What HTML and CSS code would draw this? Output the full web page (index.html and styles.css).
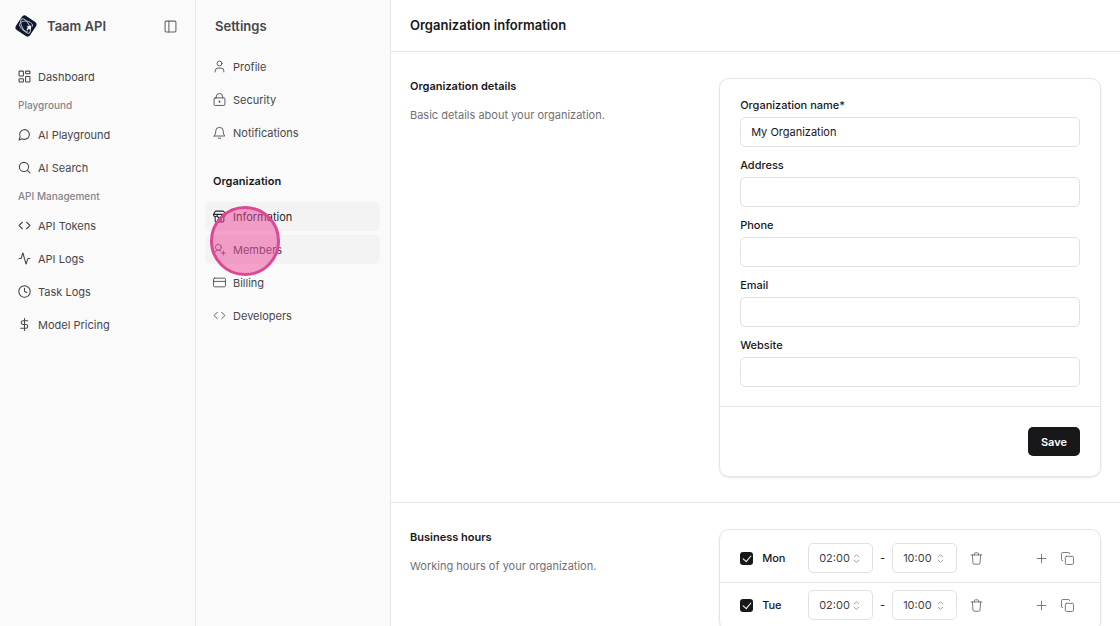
FILE: index.html
```html
<!DOCTYPE html>
<html lang="en">
<head>
<meta charset="utf-8">
<meta name="viewport" content="width=device-width, initial-scale=1">
<title>Organization information</title>
<link rel="stylesheet" href="styles.css">
</head>
<body>
<svg class="sprite" aria-hidden="true">
  <symbol id="i-panel" viewBox="0 0 24 24"><rect x="2" y="2" width="20" height="20" rx="2"/><path d="M9 2v20"/></symbol>
  <symbol id="i-dashboard" viewBox="0 0 24 24"><rect x="2" y="2" width="8" height="9" rx="1"/><rect x="14" y="2" width="8" height="5" rx="1"/><rect x="14" y="12" width="8" height="10" rx="1"/><rect x="2" y="16" width="8" height="6" rx="1"/></symbol>
  <symbol id="i-chat" viewBox="0 0 24 24"><path d="M7.9 20A9 9 0 1 0 4 16.1L2 22Z"/></symbol>
  <symbol id="i-search" viewBox="0 0 24 24"><circle cx="11" cy="11" r="8.500"/><path d="m22 22-4.800-4.800"/></symbol>
  <symbol id="i-code" viewBox="0 0 24 24"><path d="m16 18 6-6-6-6M8 6l-6 6 6 6"/></symbol>
  <symbol id="i-activity" viewBox="0 0 24 24"><path d="M22 12h-2.5a2 2 0 0 0-1.9 1.5l-2.4 8.3a.25.25 0 0 1-.5 0L9.2 2.2a.25.25 0 0 0-.5 0l-2.3 8.3A2 2 0 0 1 4.500 12H2"/></symbol>
  <symbol id="i-clock" viewBox="0 0 24 24"><circle cx="12" cy="12" r="10.500"/><path d="M12 6v6l4 2"/></symbol>
  <symbol id="i-dollar" viewBox="0 0 24 24"><path d="M12 1v22M18 5H9.500a3.500 3.500 0 0 0 0 7h5a3.500 3.500 0 0 1 0 7H5"/></symbol>
  <symbol id="i-user" viewBox="0 0 24 24"><circle cx="12" cy="6.500" r="4.500"/><path d="M4 22v-2a5 5 0 0 1 5-5h6a5 5 0 0 1 5 5v2"/></symbol>
  <symbol id="i-lock" viewBox="0 0 24 24"><rect x="2" y="9" width="20" height="14" rx="2"/><path d="M6 9V7a6 6 0 0 1 12 0v2"/><path d="M12 15.500v1" stroke-width="3"/></symbol>
  <symbol id="i-bell" viewBox="0 0 24 24"><path d="M2 18.500h20c-2-2-3-4-3-9a7 7 0 0 0-14 0c0 5-1 7-3 9ZM10 22.500h4"/></symbol>
  <symbol id="i-store" viewBox="0 0 24 24"><path d="M6 2h12a3 3 0 0 1 2.500 1.500L23 8v1a3 3 0 0 1-3 3 4 4 0 0 1-4-2 4 4 0 0 1-8 0 4 4 0 0 1-4 2 3 3 0 0 1-3-3V8l2.500-4.500A3 3 0 0 1 6 2ZM1 8h22M4 12v8a2 2 0 0 0 2 2h12a2 2 0 0 0 2-2v-8M9 22v-4a2 2 0 0 1 2-2h2a2 2 0 0 1 2 2v4"/></symbol>
  <symbol id="i-user-plus" viewBox="0 0 24 24"><circle cx="10" cy="8" r="5.500"/><path d="M2 21c0-4 3-7.500 8-7.500 2 0 3 .4 4 1M19 15v7M15.500 18.500h7"/></symbol>
  <symbol id="i-card" viewBox="0 0 24 24"><rect x="1" y="4" width="22" height="16" rx="2"/><path d="M1 10h22"/></symbol>
  <symbol id="i-trash" viewBox="0 0 24 24"><path d="M2 5.500h20M4.500 5.500l1 15a2 2 0 0 0 2 2h9a2 2 0 0 0 2-2l1-15M8 5.500v-2a2 2 0 0 1 2-2h4a2 2 0 0 1 2 2v2"/></symbol>
  <symbol id="i-plus" viewBox="0 0 24 24"><path d="M4 12h16M12 4v16"/></symbol>
  <symbol id="i-copy" viewBox="0 0 24 24"><rect x="8" y="8" width="15" height="15" rx="2"/><path d="M3 16a2 2 0 0 1-2-2V3a2 2 0 0 1 2-2h11a2 2 0 0 1 2 2"/></symbol>
  <symbol id="i-updown" viewBox="0 0 24 24"><path d="m5 8 7-6 7 6M5 16l7 6 7-6"/></symbol>
</svg>
<div class="app">
  <aside class="sidebar">
    <div class="brand">
      <svg class="logo" viewBox="0 0 24 24" aria-hidden="true"><rect class="logo-shape" x="3.500" y="3.500" width="17" height="17" rx="3.500" transform="rotate(34 12 12)"/><g class="logo-lines"><ellipse cx="11.500" cy="12" rx="8" ry="3.600" transform="rotate(62 11.500 12)"/><path d="M5.500 12c-1-4 5-6 9-4.500 3 1 4.500 3 4 5M6 12c1 4 5 6 8 5"/></g><path class="logo-mark" d="m12.500 12.500 5-1-1 4.500-1.500-1.300-1.500 1.500-1-1 1.500-1.500Z"/></svg>
      <span class="brand-name">Taam API</span>
      <button class="icon-button" type="button" aria-label="Toggle sidebar"><svg class="icon"><use href="#i-panel"/></svg></button>
    </div>
    <nav class="nav" aria-label="Main">
      <a class="nav-item" href="#"><svg class="icon"><use href="#i-dashboard"/></svg>Dashboard</a>
      <h2 class="nav-group">Playground</h2>
      <a class="nav-item" href="#"><svg class="icon"><use href="#i-chat"/></svg>AI Playground</a>
      <a class="nav-item" href="#"><svg class="icon"><use href="#i-search"/></svg>AI Search</a>
      <h2 class="nav-group">API Management</h2>
      <a class="nav-item" href="#"><svg class="icon"><use href="#i-code"/></svg>API Tokens</a>
      <a class="nav-item" href="#"><svg class="icon"><use href="#i-activity"/></svg>API Logs</a>
      <a class="nav-item" href="#"><svg class="icon"><use href="#i-clock"/></svg>Task Logs</a>
      <a class="nav-item" href="#"><svg class="icon"><use href="#i-dollar"/></svg>Model Pricing</a>
    </nav>
  </aside>
  <aside class="settings">
    <h2 class="settings-title">Settings</h2>
    <nav class="settings-nav" aria-label="Settings">
      <a class="settings-item" href="#"><svg class="icon thin"><use href="#i-user"/></svg>Profile</a>
      <a class="settings-item" href="#"><svg class="icon thin"><use href="#i-lock"/></svg>Security</a>
      <a class="settings-item" href="#"><svg class="icon thin"><use href="#i-bell"/></svg>Notifications</a>
      <h3 class="settings-group">Organization</h3>
      <a class="settings-item current" href="#" aria-current="page"><svg class="icon"><use href="#i-store"/></svg>Information</a>
      <a class="settings-item hovered" href="#"><svg class="icon thin"><use href="#i-user-plus"/></svg>Members</a>
      <a class="settings-item" href="#"><svg class="icon thin"><use href="#i-card"/></svg>Billing</a>
      <a class="settings-item" href="#"><svg class="icon thin"><use href="#i-code"/></svg>Developers</a>
    </nav>
    <span class="click-marker" aria-hidden="true"></span>
  </aside>
  <main class="main">
    <header class="page-header"><h1 class="page-title">Organization information</h1></header>
    <section class="section">
      <div class="intro">
        <h2 class="section-title">Organization details</h2>
        <p class="section-text">Basic details about your organization.</p>
      </div>
      <form class="panel">
        <div class="fields">
          <div class="field"><label for="name">Organization name*</label><input class="text-input" id="name" type="text" value="My Organization"></div>
          <div class="field"><label for="address">Address</label><input class="text-input" id="address" type="text"></div>
          <div class="field"><label for="phone">Phone</label><input class="text-input" id="phone" type="tel"></div>
          <div class="field"><label for="email">Email</label><input class="text-input" id="email" type="email"></div>
          <div class="field"><label for="website">Website</label><input class="text-input" id="website" type="url"></div>
        </div>
        <div class="panel-footer"><button class="save" type="submit">Save</button></div>
      </form>
    </section>
    <section class="section">
      <div class="intro">
        <h2 class="section-title">Business hours</h2>
        <p class="section-text">Working hours of your organization.</p>
      </div>
      <div class="panel hours">
        <div class="day">
          <label class="day-name"><input class="check" type="checkbox" checked>Mon</label>
          <span class="time"><select aria-label="Monday opens"><option>02:00</option></select><svg class="updown"><use href="#i-updown"/></svg></span>
          <span class="dash">-</span>
          <span class="time"><select aria-label="Monday closes"><option>10:00</option></select><svg class="updown"><use href="#i-updown"/></svg></span>
          <button class="icon-button remove" type="button" aria-label="Remove"><svg class="icon thin"><use href="#i-trash"/></svg></button>
          <span class="day-actions">
            <button class="icon-button" type="button" aria-label="Add"><svg class="icon thin"><use href="#i-plus"/></svg></button>
            <button class="icon-button" type="button" aria-label="Copy"><svg class="icon thin"><use href="#i-copy"/></svg></button>
          </span>
        </div>
        <div class="day">
          <label class="day-name"><input class="check" type="checkbox" checked>Tue</label>
          <span class="time"><select aria-label="Tuesday opens"><option>02:00</option></select><svg class="updown"><use href="#i-updown"/></svg></span>
          <span class="dash">-</span>
          <span class="time"><select aria-label="Tuesday closes"><option>10:00</option></select><svg class="updown"><use href="#i-updown"/></svg></span>
          <button class="icon-button remove" type="button" aria-label="Remove"><svg class="icon thin"><use href="#i-trash"/></svg></button>
          <span class="day-actions">
            <button class="icon-button" type="button" aria-label="Add"><svg class="icon thin"><use href="#i-plus"/></svg></button>
            <button class="icon-button" type="button" aria-label="Copy"><svg class="icon thin"><use href="#i-copy"/></svg></button>
          </span>
        </div>
      </div>
    </section>
  </main>
</div>
</body>
</html>
```
FILE: styles.css
```css
* { box-sizing: border-box; }
body { margin: 0; font: 11px/16px Inter, "Liberation Sans", sans-serif; color: #18181b; background: #fff; }
h1, h2, h3, p { margin: 0; font-size: inherit; }
button, input, select { font: inherit; color: inherit; margin: 0; }
a { color: inherit; text-decoration: none; }
.sprite { display: none; }
.icon { width: 13px; height: 13px; flex: none; fill: none; stroke: currentColor; stroke-width: 2; stroke-linecap: round; stroke-linejoin: round; }
.thin { stroke-width: 1.6; }
.icon-button { display: flex; padding: 0; border: 0; background: none; color: #66666c; }

.app { display: grid; grid-template-columns: 195px 195px minmax(0, 1fr); height: 100vh; overflow: hidden; }
.sidebar, .settings { background: #fafafa; color: #47474c; }
.settings { position: relative; border-left: 1px solid #e8e8ea; }

.brand { display: flex; align-items: center; height: 52px; padding: 0 18px 0 14px; }
.logo { width: 24px; height: 24px; }
.logo-shape { fill: #0f1729; }
.logo-lines { fill: none; stroke: #b4bed6; stroke-width: 1; }
.logo-mark { fill: #fff; }
.brand-name { flex: 1; padding-left: 9px; font-size: 13px; font-weight: 600; }
.nav { display: flex; flex-direction: column; padding: 10px; }
.nav-item { display: flex; align-items: center; gap: 7px; height: 29px; padding: 0 8px; margin-bottom: 4px; }
.nav-group { height: 25px; padding: 0 8px; font-size: 10px; line-height: 21px; font-weight: 500; color: #85858a; }

.settings-title { padding: 18px 19px 8px; font-size: 13px; font-weight: 600; }
.settings-nav { display: flex; flex-direction: column; gap: 4px; padding: 10px 10px 10px 9px; }
.settings-item { display: flex; align-items: center; gap: 7px; height: 29px; padding: 0 8px; border-radius: 5px; }
.settings-group { padding: 22px 8px 9px; font-weight: 600; color: #18181b; }
.current, .hovered { background: #f3f3f4; }
.current { color: #27272a; }
.click-marker { position: absolute; left: 14px; top: 206px; width: 70px; height: 70px; border: 3px solid #dc4894; border-radius: 50%; background: rgba(236, 72, 153, 0.5); pointer-events: none; }

.main { border-left: 1px solid #e5e5e8; overflow: auto; scrollbar-width: none; }
.page-header { padding: 17px 19px; border-bottom: 1px solid #e5e5e8; }
.page-title { font-size: 13px; line-height: 17px; font-weight: 600; }
.section { display: grid; grid-template-columns: minmax(0, 17fr) minmax(0, 21fr); align-items: start; padding: 26px 19px 25px; border-bottom: 1px solid #e5e5e8; }
.section-title { font-weight: 600; }
.section-text { margin-top: 13px; color: #707076; }
.panel { border: 1px solid #e5e5e8; border-radius: 10px; box-shadow: 0 1px 2px rgba(0, 0, 0, 0.1); }
.fields { display: grid; gap: 10px; padding: 18px 20px 19px; }
.field { display: grid; gap: 4px; font-weight: 500; }
.text-input { width: 100%; height: 30px; padding: 0 10px; border: 1px solid #e1e1e5; border-radius: 5px; background: #fff; font-weight: 400; }
.panel-footer { display: flex; justify-content: flex-end; padding: 20px; border-top: 1px solid #e5e5e8; }
.save { height: 29px; padding: 0 13px; border: 0; border-radius: 5px; background: #18181b; color: #fff; font-weight: 600; }

.hours { padding-top: 6px; }
.day { display: flex; align-items: center; padding: 7px 20px 9px; border-bottom: 1px solid #e5e5e8; }
.day-name { display: flex; align-items: center; gap: 9px; width: 68px; font-weight: 500; }
.check { appearance: none; width: 13px; height: 13px; border-radius: 3px; background: #18181b; display: grid; place-items: center; }
.check:checked::before { content: ""; width: 7px; height: 4px; border: solid #fff; border-width: 0 0 1px 1px; transform: translateY(-1px) rotate(-50deg); }
.time { display: grid; grid-template-columns: 1fr 16px; align-items: center; width: 65px; }
.time select { grid-area: 1 / 1 / 2 / 3; appearance: none; height: 30px; padding: 0 10px; border: 1px solid #e1e1e5; border-radius: 5px; background: #fff; color: #3f3f46; }
.updown { grid-area: 1 / 2; width: 9px; height: 9px; margin-left: -5px; fill: none; stroke: #85858a; stroke-width: 2; pointer-events: none; }
.dash { width: 19px; text-align: center; }
.remove { margin-left: 13px; }
.day-actions { display: flex; gap: 13px; margin-left: auto; padding-right: 6px; }
```
